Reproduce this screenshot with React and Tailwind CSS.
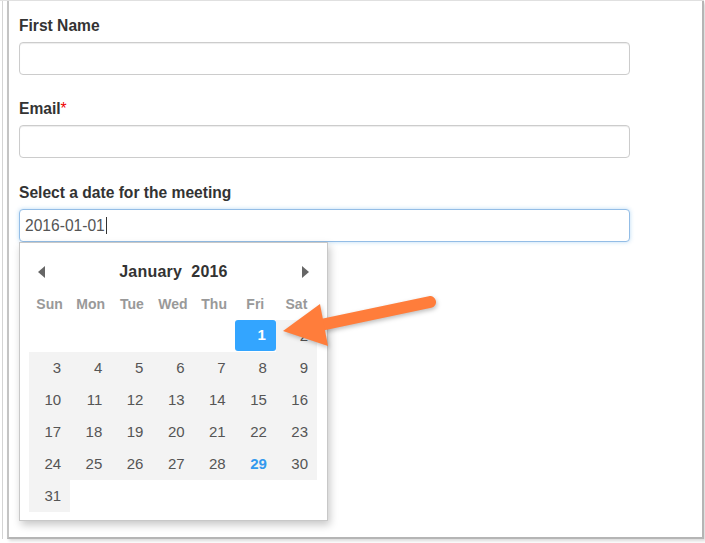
import React from "react";

const dayNames = ["Sun", "Mon", "Tue", "Wed", "Thu", "Fri", "Sat"];

// January 2016 starts on a Friday
const cells = [
  ...Array(5).fill(null),
  ...Array.from({ length: 31 }, (_, i) => i + 1),
];

function Field({ label, required, className = "", children }) {
  return (
    <div className={className}>
      <div className="h-[20px] text-[15.6px] leading-[21px] font-bold text-[#333]">
        {label}
        {required && <span className="text-[#e00] font-normal">*</span>}
      </div>
      {children}
    </div>
  );
}

function Input({ focused, value }) {
  return (
    <div
      className={
        "mt-[7px] h-[33px] w-[611px] rounded-[4px] border bg-white flex items-center pl-[5px] text-[15.6px] text-[#555] " +
        (focused
          ? "border-[#93bde6] shadow-[0_0_4px_rgba(102,175,233,0.45)]"
          : "border-[#ccc] shadow-[inset_0_1px_1px_rgba(0,0,0,0.075)]")
      }
    >
      {value}
      {focused && <span className="ml-[1px] h-[17px] w-px bg-[#333]" />}
    </div>
  );
}

function Calendar() {
  return (
    <div className="w-[309px] h-[279px] border border-[#c8c8c8] bg-white shadow-[2px_4px_8px_rgba(0,0,0,0.22)] px-[9px] pt-[12px]">
      <div className="h-[33px] flex items-center justify-between px-[9px]">
        <svg width="7" height="12" viewBox="0 0 7 12">
          <path d="M7 0 L0 6 L7 12 Z" fill="#666" />
        </svg>
        <div className="text-[16px] font-bold text-[#333] tracking-[0.2px]">
          January&nbsp; 2016
        </div>
        <svg width="7" height="12" viewBox="0 0 7 12">
          <path d="M0 0 L7 6 L0 12 Z" fill="#666" />
        </svg>
      </div>
      <div className="grid grid-cols-7 w-[288px]">
        {dayNames.map((d) => (
          <div
            key={d}
            className="h-[32px] flex items-center justify-center text-[14px] font-bold text-[#999]"
          >
            {d}
          </div>
        ))}
        {cells.map((n, i) => {
          if (n === null) return <div key={i} className="h-[32px]" />;
          if (n === 1)
            return (
              <div
                key={i}
                className="h-[31px] rounded-[3px] bg-[#33a5ff] text-white font-bold text-[15px] flex items-center justify-end pr-[10px]"
              >
                1
              </div>
            );
          return (
            <div
              key={i}
              className={
                "h-[32px] bg-[#f3f3f3] flex items-center justify-end pr-[9px] text-[15px] " +
                (n === 29 ? "text-[#3399ee] font-bold" : "text-[#555]")
              }
            >
              {n}
            </div>
          );
        })}
      </div>
    </div>
  );
}

export default function App() {
  return (
    <div
      className="relative w-[705px] h-[543px] bg-white overflow-hidden"
      style={{ fontFamily: '"Liberation Sans", Arial, sans-serif' }}
    >
      <div className="h-[539px] w-[704px] border-t border-[#e2e2e2] pl-[2px]">
        <div className="h-full border-l border-[#d4d4d4] pl-[4px]">
          <div className="h-full border-l-2 border-r-2 border-b-2 border-l-[#c4c4c4] border-r-[#b5b5b5] border-b-[#b5b5b5] shadow-[2px_2px_3px_rgba(0,0,0,0.15)] pl-[10px] pt-[14px] flex flex-col gap-[23px]">
            <Field label="First Name">
              <Input />
            </Field>
            <Field label="Email" required>
              <Input />
            </Field>
            <Field label="Select a date for the meeting" className="mt-[1px]">
              <Input focused value="2016-01-01" />
              <Calendar />
            </Field>
          </div>
        </div>
      </div>

      {/* annotation arrow */}
      <svg
        className="absolute left-0 top-0 pointer-events-none"
        width="705"
        height="543"
        style={{ filter: "drop-shadow(1px 2px 2px rgba(0,0,0,0.25))" }}
      >
        <line
          x1="316"
          y1="326"
          x2="430"
          y2="302"
          stroke="#ff7d3b"
          strokeWidth="12"
          strokeLinecap="round"
        />
        <path d="M283 331 L320 304 L328 346 Z" fill="#ff7d3b" />
      </svg>
    </div>
  );
}
